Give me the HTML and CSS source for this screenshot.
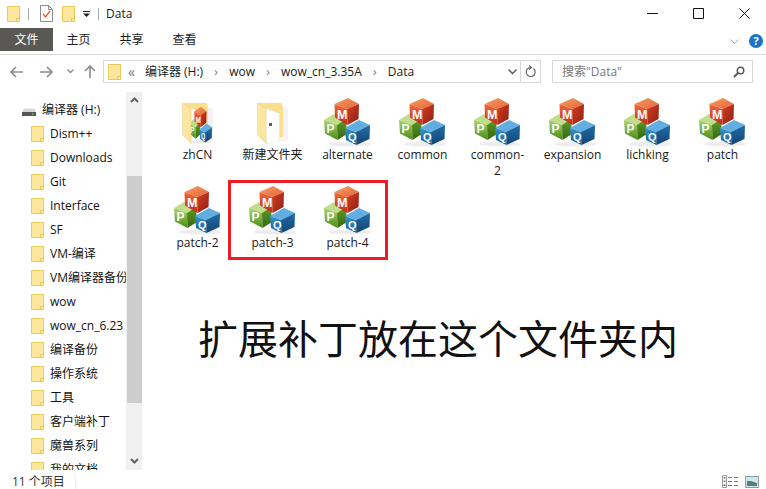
FILE: index.html
```html
<!DOCTYPE html>
<html lang="zh">
<head>
<meta charset="utf-8">
<title>Data</title>
<link rel="stylesheet" href="styles.css">
</head>
<body>
<svg class="defs" width="0" height="0">
  <defs>
    <symbol id="fold" viewBox="0 0 13 16">
      <path d="M.5.5h12v15H.5z" fill="#fde79d" stroke="#e9c85a"/>
      <path d="M9.5 15.5v-3h3" fill="#fbeebf" stroke="#e9c85a"/>
    </symbol>
    <linearGradient id="rl" x1="0" y1="0" x2="0" y2="1"><stop offset="0" stop-color="#f06a3a"/><stop offset="1" stop-color="#c8281a"/></linearGradient>
    <linearGradient id="rr" x1="0" y1="0" x2="1" y2="1"><stop offset="0" stop-color="#d83e24"/><stop offset="1" stop-color="#8a1f12"/></linearGradient>
    <linearGradient id="rt" x1="0" y1="0" x2="1" y2="1"><stop offset="0" stop-color="#f3a060"/><stop offset="1" stop-color="#e8623a"/></linearGradient>
    <linearGradient id="gl" x1="0" y1="0" x2="0" y2="1"><stop offset="0" stop-color="#a9d36a"/><stop offset="1" stop-color="#4c8c1a"/></linearGradient>
    <linearGradient id="gr" x1="0" y1="0" x2="0" y2="1"><stop offset="0" stop-color="#5f9a2a"/><stop offset="1" stop-color="#35680f"/></linearGradient>
    <linearGradient id="bl" x1="0" y1="0" x2="0" y2="1"><stop offset="0" stop-color="#3a93cc"/><stop offset="1" stop-color="#175a98"/></linearGradient>
    <linearGradient id="br" x1="0" y1="0" x2="0" y2="1"><stop offset="0" stop-color="#1f6ea8"/><stop offset="1" stop-color="#134474"/></linearGradient>
    <symbol id="mpq" viewBox="0 0 48 50" preserveAspectRatio="none">
      <ellipse cx="26" cy="47" rx="21" ry="2.5" fill="#000" opacity=".07"/>
      <path d="M0 23 10 17 22 22 13 28Z" fill="#c0de8a"/>
      <path d="M0 23 13 28 13.500 43 1 36.500Z" fill="url(#gl)"/>
      <path d="M13 28 22 22 23 37 13.500 43Z" fill="url(#gr)"/>
      <text class="cube-letter" x="2.500" y="36" font-size="12">P</text>
      <path d="M21 31 35 23 46 28 32 35Z" fill="#62aee0"/>
      <path d="M21 31 32 35 32.500 48 22 43Z" fill="url(#bl)"/>
      <path d="M32 35 46 28 45.500 42 32.500 48Z" fill="url(#br)"/>
      <text class="cube-letter" x="24" y="43.500" font-size="11">Q</text>
      <path d="M10.500 7 24 1 35 7 23 12Z" fill="url(#rt)"/>
      <path d="M10.500 7 23 12 23.500 28 11 20.500Z" fill="url(#rl)"/>
      <path d="M23 12 35 7 34.500 22 23.500 28Z" fill="url(#rr)"/>
      <text class="cube-letter" x="13" y="22" font-size="12.500">M</text>
    </symbol>
    <symbol id="openfold" viewBox="0 0 48 50">
      <path d="M31 10 39 11.500V43L30 45Z" fill="#f3f3f5"/>
      <path d="M8.500 6H33L34 11V40H12Z" fill="#fbdf8c"/>
      <path d="M17 11.500 30.500 16.500V44.800L17 46.500Z" fill="#fff" stroke="#e2e2e2" stroke-width=".5"/>
    </symbol>
    <symbol id="flap" viewBox="0 0 48 50">
      <path d="M8.500 6.300 17 11.500V46.500L8.700 38Z" fill="#fde7a0" stroke="#e6cc80" stroke-width=".5"/>
    </symbol>
  </defs>
</svg>
<div class="window">
  <header class="titlebar">
    <svg class="fold-sm"><use href="#fold"/></svg>
    <span class="vsep"></span>
    <svg class="qa-doc" viewBox="0 0 13 17"><path d="M.5.5h8l4 4v12H.5z" fill="#fff" stroke="#8a8a8a"/><path d="M8.500.5v4h4" fill="none" stroke="#8a8a8a"/><path d="M3 9l2.500 3L10 6" fill="none" stroke="#e4572e" stroke-width="1.300"/></svg>
    <svg class="fold-sm qa-fold"><use href="#fold"/></svg>
    <svg class="qa-drop" viewBox="0 0 8 6"><path d="M0 0h7v1H0zM0 2.500h7L3.500 6z" fill="#222"/></svg>
    <span class="vsep qa-sep"></span>
    <span class="wintitle">Data</span>
    <div class="winbtns">
      <svg class="winbtn" viewBox="0 0 11 11"><path d="M0 5.500h11" stroke="#111"/></svg>
      <svg class="winbtn" viewBox="0 0 11 11"><path d="M.5.5h10v10H.5z" fill="none" stroke="#111"/></svg>
      <svg class="winbtn" viewBox="0 0 11 11"><path d="M.5.5l10 10M10.500.5l-10 10" stroke="#111" fill="none"/></svg>
    </div>
  </header>
  <nav class="tabs">
    <span class="tab tab-file">文件</span>
    <span class="tab">主页</span>
    <span class="tab">共享</span>
    <span class="tab">查看</span>
    <svg class="tab-chev" viewBox="0 0 9 5"><path d="M.5.500l4 4 4-4" fill="none" stroke="#aaa"/></svg>
    <span class="help">?</span>
  </nav>
  <div class="navbar">
    <svg class="nav-ic back" viewBox="0 0 13 12"><path d="M6 1 1 6l5 5M1 6h12" fill="none" stroke="#8c8c8c" stroke-width="1.600"/></svg>
    <svg class="nav-ic fwd" viewBox="0 0 13 12"><path d="M7 1l5 5-5 5M12 6H0" fill="none" stroke="#8c8c8c" stroke-width="1.600"/></svg>
    <svg class="nav-chev" viewBox="0 0 7 5"><path d="M.5.500l3 3 3-3" fill="none" stroke="#8c8c8c" stroke-width="1.300"/></svg>
    <svg class="nav-ic up" viewBox="0 0 12 13"><path d="M1 6l5-5 5 5M6 1v12" fill="none" stroke="#8c8c8c" stroke-width="1.600"/></svg>
    <div class="address">
      <svg class="fold-sm"><use href="#fold"/></svg>
      <span class="dbl">«</span>
      <span class="crumb first">编译器 (H:)</span><span class="sep">›</span>
      <span class="crumb">wow</span><span class="sep">›</span>
      <span class="crumb">wow_cn_3.35A</span><span class="sep">›</span>
      <span class="crumb last">Data</span>
      <svg class="addr-drop" viewBox="0 0 9 6"><path d="M.5.500l4 4 4-4" fill="none" stroke="#555" stroke-width="1.400"/></svg>
      <span class="addr-div"></span>
      <svg class="refresh" viewBox="0 0 11 13"><path d="M8.500 3.500a4.500 4.500 0 1 1-3-1h1M4 .5l2.500 2-2.500 2" fill="none" stroke="#666" stroke-width="1.200"/></svg>
    </div>
    <div class="search">
      <span class="search-text">搜索"Data"</span>
      <svg class="search-ic" viewBox="0 0 12 12"><circle cx="7.500" cy="4.500" r="3.300" fill="none" stroke="#555" stroke-width="1.400"/><path d="M5 7l-4 4" stroke="#555" stroke-width="2"/></svg>
    </div>
  </div>
  <div class="main">
    <aside class="sidebar">
      <div class="tree">
        <div class="row drive">
          <svg class="drive-ic" viewBox="0 0 14 8"><path d="M2 .5h10L14 4v4H0V4Z" fill="#d8d8d8"/><path d="M0 4h14v4H0z" fill="#555"/><path d="M10 5.500h2v1h-2z" fill="#5fd45f"/></svg>
          <span>编译器 (H:)</span>
        </div>
        <div class="row"><svg class="fold-sm"><use href="#fold"/></svg><span>Dism++</span></div>
        <div class="row"><svg class="fold-sm"><use href="#fold"/></svg><span>Downloads</span></div>
        <div class="row"><svg class="fold-sm"><use href="#fold"/></svg><span>Git</span></div>
        <div class="row"><svg class="fold-sm"><use href="#fold"/></svg><span>Interface</span></div>
        <div class="row"><svg class="fold-sm"><use href="#fold"/></svg><span>SF</span></div>
        <div class="row"><svg class="fold-sm"><use href="#fold"/></svg><span>VM-编译</span></div>
        <div class="row"><svg class="fold-sm"><use href="#fold"/></svg><span>VM编译器备份</span></div>
        <div class="row"><svg class="fold-sm"><use href="#fold"/></svg><span>wow</span></div>
        <div class="row"><svg class="fold-sm"><use href="#fold"/></svg><span>wow_cn_6.23</span></div>
        <div class="row"><svg class="fold-sm"><use href="#fold"/></svg><span>编译备份</span></div>
        <div class="row"><svg class="fold-sm"><use href="#fold"/></svg><span>操作系统</span></div>
        <div class="row"><svg class="fold-sm"><use href="#fold"/></svg><span>工具</span></div>
        <div class="row"><svg class="fold-sm"><use href="#fold"/></svg><span>客户端补丁</span></div>
        <div class="row"><svg class="fold-sm"><use href="#fold"/></svg><span>魔兽系列</span></div>
        <div class="row"><svg class="fold-sm"><use href="#fold"/></svg><span>我的文档</span></div>
      </div>
      <div class="scrollbar">
        <svg class="sb-arrow" viewBox="0 0 9 6"><path d="M1 5l3.500-3.500L8 5" fill="none" stroke="#606060" stroke-width="2"/></svg>
        <div class="sb-thumb"></div>
        <svg class="sb-arrow sb-down" viewBox="0 0 9 6"><path d="M1 1l3.500 3.500L8 1" fill="none" stroke="#606060" stroke-width="2"/></svg>
      </div>
    </aside>
    <section class="content">
      <div class="grid">
        <div class="item"><span class="icon-stack"><svg class="big"><use href="#openfold"/></svg><svg class="inner"><use href="#mpq"/></svg><svg class="big over"><use href="#flap"/></svg></span><span class="label">zhCN</span></div>
        <div class="item"><span class="icon-stack"><svg class="big"><use href="#openfold"/></svg><svg class="big over"><use href="#flap"/></svg><span class="dot"></span></span><span class="label">新建文件夹</span></div>
        <div class="item"><svg class="big"><use href="#mpq"/></svg><span class="label">alternate</span></div>
        <div class="item"><svg class="big"><use href="#mpq"/></svg><span class="label">common</span></div>
        <div class="item"><svg class="big"><use href="#mpq"/></svg><span class="label">common-<br>2</span></div>
        <div class="item"><svg class="big"><use href="#mpq"/></svg><span class="label">expansion</span></div>
        <div class="item"><svg class="big"><use href="#mpq"/></svg><span class="label">lichking</span></div>
        <div class="item"><svg class="big"><use href="#mpq"/></svg><span class="label">patch</span></div>
        <div class="item"><svg class="big"><use href="#mpq"/></svg><span class="label">patch-2</span></div>
        <div class="item"><svg class="big"><use href="#mpq"/></svg><span class="label">patch-3</span></div>
        <div class="item"><svg class="big"><use href="#mpq"/></svg><span class="label">patch-4</span></div>
      </div>
      <div class="highlight"></div>
      <p class="note">扩展补丁放在这个文件夹内</p>
    </section>
  </div>
  <footer class="status">
    <span class="count">11 个项目</span>
    <span class="status-div"></span>
    <svg class="view-list" viewBox="0 0 16 13"><path d="M.5.500h4v12h-4z" fill="#fff" stroke="#9a9a9a"/><path d="M1.500 2h2v1.500h-2z" fill="#5a8f5a"/><path d="M1.500 5.500h2V7h-2z" fill="#4a80d0"/><path d="M1.500 9.500h2V11h-2z" fill="#c83030"/><path d="M6 2.500h4M12 2.500h4M6 6.500h4M12 6.500h4M6 10.500h4M12 10.500h4" stroke="#777"/></svg>
    <svg class="view-thumb" viewBox="0 0 14 12"><path d="M.5.500h13v11H.5z" fill="#cfe6f5" stroke="#999"/><path d="M2 5l4 0 6 2v3H2z" fill="#4f8078"/></svg>
  </footer>
</div>
</body>
</html>
```
FILE: styles.css
```css
* { box-sizing: border-box; }
html, body { margin: 0; padding: 0; background: #fff; }
body {
  width: 766px;
  height: 489px;
  overflow: hidden;
  font: 12px/16px "Open Sans", "Noto Sans CJK SC", sans-serif;
  color: #1a1a1a;
}
.defs { position: absolute; }
.window { display: flex; flex-direction: column; height: 489px; }
.fold-sm { width: 13px; height: 16px; flex: none; display: block; }

.titlebar { display: flex; align-items: center; height: 28px; padding: 0 0 1px 7px; flex: none; }
.vsep { width: 1px; height: 12px; background: #aaa; margin-left: 8px; }
.qa-doc { width: 13px; height: 17px; margin-left: 11px; }
.qa-fold { margin-left: 9px; }
.qa-drop { width: 8px; height: 6px; margin-left: 8px; }
.qa-sep { margin-left: 7px; }
.wintitle { margin-left: 7px; }
.winbtns { display: flex; align-items: center; margin-left: auto; padding-right: 16px; gap: 35px; }
.winbtn { width: 11px; height: 11px; display: block; }

.tabs { display: flex; align-items: center; height: 27px; border-bottom: 1px solid #dadada; flex: none; padding-bottom: 3px; padding-right: 3px; }
.tab { width: 53px; height: 23px; line-height: 24px; text-align: center; flex: none; }
.tab-file { background: #5a5854; color: #fff; margin-right: -1px; }
.tab-chev { width: 9px; height: 5px; margin: 3px 10px 0 auto; }
.help { width: 14px; height: 14px; margin-top: 3px; border-radius: 50%; background: #1c74c8; color: #fff; font-size: 11px; line-height: 14px; font-weight: 700; text-align: center; }

.navbar { display: flex; align-items: center; height: 37px; flex: none; padding: 0 12px 4px 10px; }
.nav-ic { width: 13px; height: 12px; display: block; flex: none; }
.fwd { margin-left: 17px; }
.nav-chev { width: 7px; height: 5px; margin-left: 14px; flex: none; }
.up { margin-left: 10px; width: 12px; height: 13px; }
.address { display: flex; align-items: center; width: 438px; height: 23px; margin-left: 7px; border: 1px solid #d9d9d9; padding-left: 4px; flex: none; }
.dbl { margin-left: 7px; color: #777; font-size: 14px; }
.crumb.first { margin-left: 10px; }
.sep { width: 26px; text-align: center; color: #777; }
.addr-drop { width: 9px; height: 6px; margin-left: auto; }
.addr-div { width: 1px; height: 21px; background: #d9d9d9; margin-left: 3px; }
.refresh { width: 11px; height: 13px; margin: 0 4px; }
.search { display: flex; align-items: center; justify-content: space-between; width: 201px; height: 23px; margin-left: 11px; border: 1px solid #d9d9d9; padding: 0 7px 0 9px; flex: none; }
.search-text { color: #777; }
.search-ic { width: 12px; height: 12px; }

.main { display: flex; flex: 1; min-height: 0; overflow: hidden; }
.sidebar { display: flex; width: 142px; flex: none; }
.tree { width: 126px; overflow: hidden; flex: none; padding-top: 6px; }
.row { display: flex; align-items: center; height: 24px; padding-left: 31px; gap: 6px; white-space: nowrap; color: #111; }
.row.drive { padding-left: 22px; gap: 6px; }
.drive-ic { width: 14px; height: 8px; margin-top: 3px; }
.scrollbar { width: 16px; flex: none; background: #f0f0f0; display: flex; flex-direction: column; align-items: center; padding-top: 5px; }
.sb-arrow { width: 9px; height: 6px; flex: none; }
.sb-thumb { width: 15px; height: 227px; margin-top: 73px; background: #cdcdcd; flex: none; }
.sb-down { margin-top: 55px; }

.content { flex: 1; position: relative; padding: 5px 0 0 18px; min-width: 0; }
.grid { display: grid; grid-template-columns: repeat(8, 75px); row-gap: 6px; }
.item { display: flex; flex-direction: column; align-items: center; height: 82px; text-align: center; }
.big { width: 48px; height: 50px; display: block; flex: none; }
.label { display: block; color: #1a1a1a; }
.icon-stack { position: relative; display: block; width: 48px; height: 50px; }
.over { position: absolute; left: 0; top: 0; }
.inner { position: absolute; left: 15px; top: 9px; width: 24px; height: 38px; }
.dot { position: absolute; left: 20px; top: 26px; width: 3px; height: 3px; background: #555a70; }
.cube-letter { fill: #fff; font-family: "Liberation Sans", sans-serif; font-weight: 700; }

.highlight { position: absolute; left: 86px; top: 88px; width: 160px; height: 80px; border: 3px solid #ed1c24; }
.note { margin: 46px 0 0 18px; width: 520px; font-size: 40px; line-height: 52px; text-align: center; color: #111; white-space: nowrap; }

.status { display: flex; align-items: center; height: 19px; flex: none; padding: 4px 7px 0 12px; color: #333; }
.count { width: 63px; }
.status-div { width: 1px; height: 14px; background: #eee; }
.view-list { width: 16px; height: 13px; margin-left: auto; }
.view-thumb { width: 14px; height: 12px; margin-left: 7px; }
```
